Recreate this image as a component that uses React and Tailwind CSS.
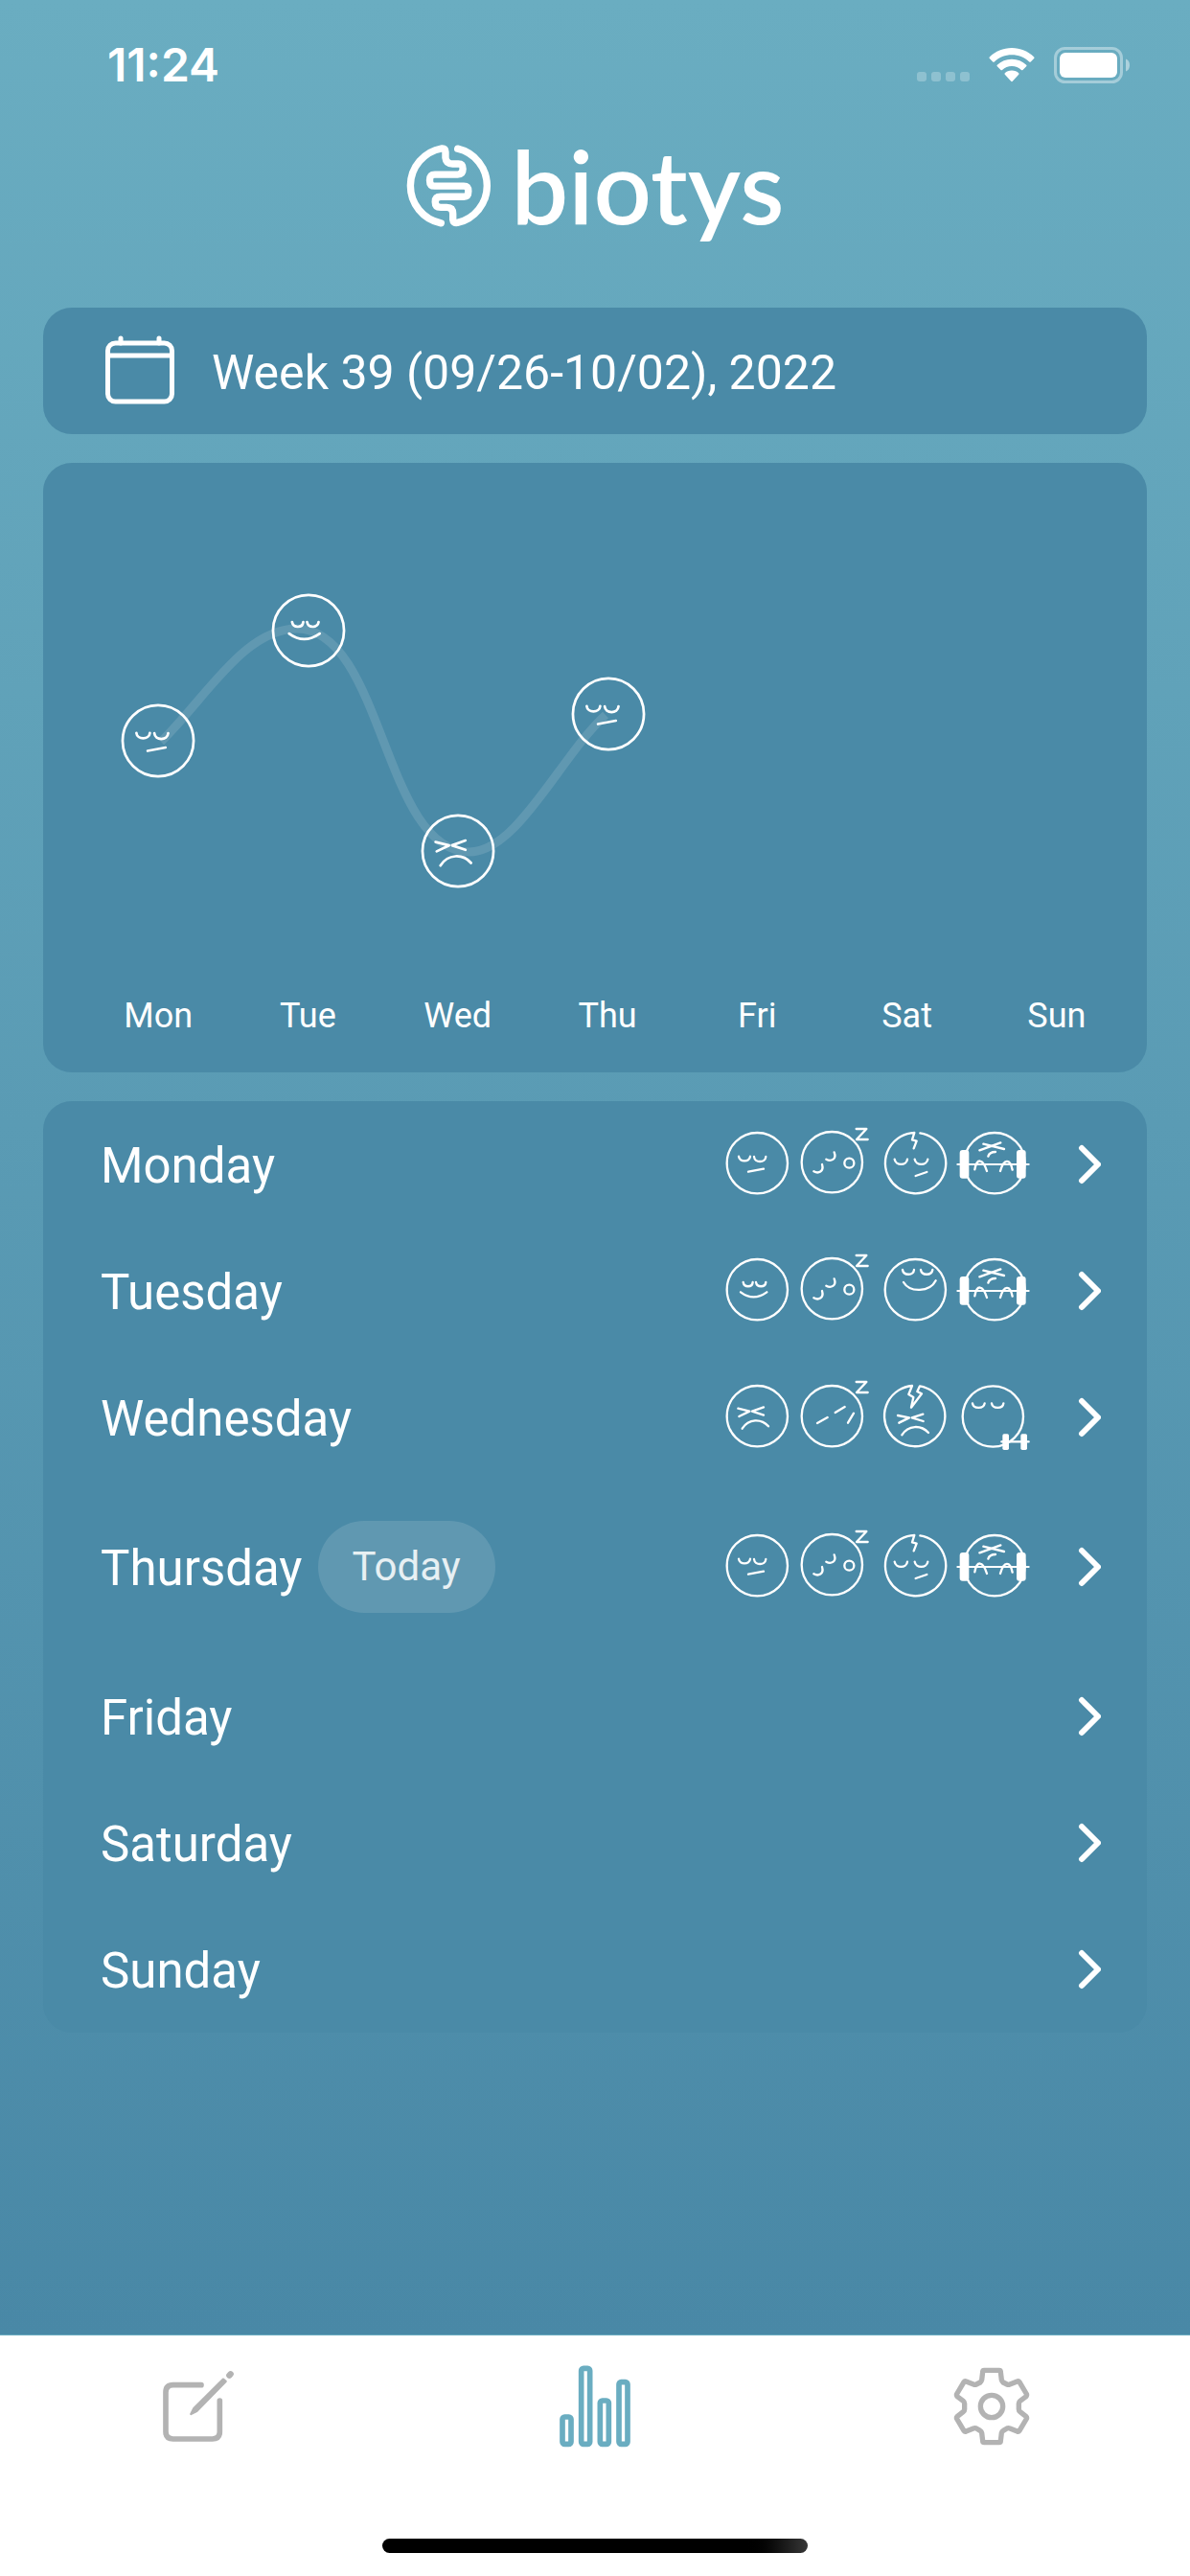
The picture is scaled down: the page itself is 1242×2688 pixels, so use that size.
import React from "react";

const days = [
  { name: "Monday", short: "Mon", mood: "neutral", sleep: "ok", pain: "mild", sport: "heavy" },
  { name: "Tuesday", short: "Tue", mood: "happy", sleep: "ok", pain: "none", sport: "heavy" },
  { name: "Wednesday", short: "Wed", mood: "sad", sleep: "bad", pain: "strong", sport: "light" },
  { name: "Thursday", short: "Thu", mood: "neutral", sleep: "ok", pain: "mild", sport: "heavy", today: true },
  { name: "Friday", short: "Fri" },
  { name: "Saturday", short: "Sat" },
  { name: "Sunday", short: "Sun" },
];

// position of each mood on the weekly chart
const points = [
  { x: 120, y: 290, mood: "neutral" },
  { x: 277, y: 175, mood: "happy" },
  { x: 433, y: 405, mood: "sad" },
  { x: 590, y: 262, mood: "neutral" },
];

const moodPaths = {
  neutral: "M94 140C96 159 128 159 130 140M142 141C144 161 177 161 179 141M124 188L172 179",
  happy: "M108 138C111 155 136 155 138 138M148 138C151 155 177 155 179 138M100 169Q140 199 182 169",
  sad: "M92 137L128 146L95 162M172 133L136 146L172 158M105 200C125 168 165 168 187 193",
};

const Mood = ({ type }) => (
  <>
    <circle cx="152" cy="161" r="95" />
    <path d={moodPaths[type]} />
  </>
);

const IconBox = ({ x, children }) => (
  <svg
    viewBox={`${x} 45 240 240`}
    className="w-20 h-20"
    fill="none"
    stroke="white"
    strokeWidth="7"
    strokeLinecap="round"
    strokeLinejoin="round"
  >
    {children}
  </svg>
);

const SleepIcon = ({ type }) => (
  <IconBox x={286}>
    <circle cx="386" cy={type === "bad" ? 161 : 158} r="95" />
    <path d="M462 54H494L463 87H498" />
    {type === "bad" ? (
      <path d="M340 183L372 165M396 150L426 132M436 182L454 152" />
    ) : (
      <>
        <path d="M393 127C402 150 382 157 368 149M355 165C362 188 343 195 329 187" />
        <circle cx="440" cy="161" r="15" />
      </>
    )}
  </IconBox>
);

const PainIcon = ({ type }) => (
  <IconBox x={526}>
    {type === "none" && (
      <>
        <circle cx="647" cy="161" r="95" />
        <path d="M607 99C610 118 641 118 643 99M664 99C667 118 698 118 701 99M610 138C630 171 692 170 711 133" />
      </>
    )}
    {type === "mild" && (
      <>
        <path d="M662 67A95 95 0 1 1 644 66L637 88L651 92L642 115" />
        <path d="M582 149C585 170 620 170 622 149M645 149C648 170 683 170 686 149M648 201L683 189" />
      </>
    )}
    {type === "strong" && (
      <>
        <path d="M661 67A95 95 0 1 1 637 66L626 93L641 102L634 134L667 91L653 84Z" />
        <path d="M592 159L628 166L596 182M671 155L636 166L672 177M605 220C625 188 665 188 688 213" />
      </>
    )}
  </IconBox>
);

const SportIcon = ({ type }) => (
  <IconBox x={766}>
    {type === "heavy" ? (
      <>
        <circle cx="895" cy="161" r="95" />
        <path d="M860 101L925 117M848 121L914 97M875 140C878 129 886 126 898 126" />
        <path d="M779 165H1002" strokeWidth="6" />
        <path d="M833 181C839 146 858 144 871 186M913 186C924 146 944 146 951 182" />
        <rect x="786" y="120" width="29" height="89" rx="9" fill="white" stroke="none" />
        <rect x="964" y="120" width="29" height="89" rx="9" fill="white" stroke="none" />
      </>
    ) : (
      <>
        <circle cx="890" cy="162" r="95" />
        <path d="M826 121C829 139 861 139 864 121M886 121C889 139 921 139 923 121M917 241H1002" />
        <rect x="920" y="217" width="20" height="50" rx="5" fill="white" stroke="none" />
        <rect x="977" y="217" width="20" height="50" rx="5" fill="white" stroke="none" />
      </>
    )}
  </IconBox>
);

const StatusBar = () => (
  <div className="flex justify-between items-center h-[135px] pl-[112px] pr-[62px] text-white">
    <span className="text-[48px] leading-none font-semibold font-[Inter,sans-serif]">11:24</span>
    <div className="flex items-center gap-5">
      <div className="flex gap-[5px] pt-6">
        <span className="w-2.5 h-2.5 rounded-[3px] bg-white/25" />
        <span className="w-2.5 h-2.5 rounded-[3px] bg-white/25" />
        <span className="w-2.5 h-2.5 rounded-[3px] bg-white/25" />
        <span className="w-2.5 h-2.5 rounded-[3px] bg-white/25" />
      </div>
      <svg viewBox="0 0 48 36" className="w-12 h-9" fill="white">
        <path d="M24 0C33 0 41 3.500 47.200 9.400Q48 10.200 47.200 11L43.800 14.400Q43 15 42.200 14.400C37 9.600 31 7.300 24 7.300S11 9.600 5.800 14.400Q5 15 4.200 14.400L.8 11Q0 10.200 .8 9.400C7 3.500 15 0 24 0Z" />
        <path d="M24 11.800C30 11.800 35 14 39.200 17.700Q40 18.500 39.200 19.300L35.500 23Q34.700 23.600 34 23C31 20.500 28 19.100 24 19.100S17 20.500 14 23Q13.300 23.600 12.500 23L8.800 19.300Q8 18.500 8.800 17.700C13 14 18 11.800 24 11.800Z" />
        <path d="M24 23.600C27 23.600 29.500 24.600 31.200 26.200Q32 27 31.200 27.800L24.800 34.800Q24 35.600 23.200 34.800L16.800 27.800Q16 27 16.800 26.200C18.500 24.600 21 23.600 24 23.600Z" />
      </svg>
      <svg viewBox="0 0 80 38" className="w-20 h-[38px]" fill="none">
        <rect x="1.500" y="1.500" width="69" height="35" rx="10" stroke="white" strokeOpacity=".4" strokeWidth="3" />
        <rect x="6" y="6" width="60" height="26" rx="6" fill="white" />
        <path d="M75 12.500Q79 14 79 19T75 25.500Z" fill="white" fillOpacity=".45" />
      </svg>
    </div>
  </div>
);

const Logo = () => (
  <h1 className="flex justify-center items-center gap-5 h-[126px] pb-2.5 text-white">
    <svg viewBox="78 60 268 264" className="w-[90px] h-[89px]" fill="none" stroke="white" strokeWidth="22" strokeLinecap="round">
      <path d="M186 309A118 118 0 0 1 189 77Q200 76 200 88V106Q202 125 222 125H240Q254 125 254 141Q254 158 238 158H167Q151 158 151 176Q151 194 167 194H257Q271 194 271 210Q271 227 257 227H185Q168 227 168 243Q168 260 185 260H204Q223 260 223 280V298Q224 310 237 308A118 118 0 0 0 238 78" />
    </svg>
    <span className="text-[106px] leading-none font-semibold font-[Lato,sans-serif]">biotys</span>
  </h1>
);

const WeekPicker = () => (
  <button className="flex items-center gap-[38px] w-full h-[132px] px-16 rounded-[30px] bg-[#4a8aa7] text-[50px]">
    <svg viewBox="0 0 74 74" className="w-[74px] h-[74px]" fill="none" stroke="white" strokeWidth="5" strokeLinecap="round">
      <rect x="3.500" y="8" width="67" height="61" rx="8" />
      <path d="M4 21H70" />
      <path d="M17 3V8M57 3V8" />
    </svg>
    <span className="pt-1">Week 39 (09/26-10/02), 2022</span>
  </button>
);

const MoodChart = () => (
  <section className="pb-8 rounded-[30px] bg-[#4a8aa7]">
    <svg viewBox="0 0 1152 550" className="w-full" fill="none">
      <path
        d="M123 291C170 245 210 173 265 173C355 174 355 406 445 406C495 406 540 306 587 263"
        stroke="white"
        strokeOpacity=".12"
        strokeWidth="9"
      />
      {points.map((p) => (
        <g
          key={p.x}
          transform={`translate(${p.x} ${p.y}) scale(.39) translate(-152 -161)`}
          stroke="white"
          strokeWidth="7"
          strokeLinecap="round"
          strokeLinejoin="round"
        >
          <Mood type={p.mood} />
        </g>
      ))}
    </svg>
    <div className="grid grid-cols-7 pl-[42px] pr-4 text-center text-[36px] leading-[54px]">
      {days.map((day) => (
        <span key={day.short}>{day.short}</span>
      ))}
    </div>
  </section>
);

const DayRow = ({ day }) => (
  <li>
    <a href={`#${day.name}`} className="flex items-center min-h-[132px] pl-[60px] pr-12">
      <span className="pt-1 text-[51px]">{day.name}</span>
      {day.today && (
        <span className="my-[42px] ml-4 px-9 rounded-full bg-white/12 text-[42px] leading-[96px] text-white/85">
          Today
        </span>
      )}
      {day.mood && (
        <span className="flex ml-auto">
          <IconBox x={46}>
            <Mood type={day.mood} />
          </IconBox>
          <SleepIcon type={day.sleep} />
          <PainIcon type={day.pain} />
          <SportIcon type={day.sport} />
        </span>
      )}
      <svg
        viewBox="0 0 24 42"
        className={day.mood ? "w-6 h-[42px] ml-[50px]" : "w-6 h-[42px] ml-auto"}
        fill="none"
        stroke="white"
        strokeWidth="6"
        strokeLinecap="round"
        strokeLinejoin="round"
      >
        <path d="M4 4L21 21L4 38" />
      </svg>
    </a>
  </li>
);

const TabBar = () => (
  <footer className="bg-white border-t border-[#6aadc1] pt-[13px] pb-6">
    <nav className="grid grid-cols-3 justify-items-center">
      <a href="#diary" aria-label="Diary">
        <svg viewBox="6 0 390 360" className="w-[130px] h-[120px]" fill="none" stroke="#b3b3b3" strokeWidth="17" strokeLinecap="round">
          <path d="M210 116H122Q99 116 99 139V262Q99 285 122 285H245Q268 285 268 262V165" />
          <path
            d="M178 207L187 189L279 98L287 105L196 198Z"
            fill="#b3b3b3"
            strokeWidth="7"
            strokeLinejoin="round"
          />
          <path d="M298 86L302 82" strokeWidth="19" />
        </svg>
      </a>
      <a href="#stats" aria-label="Statistics">
        <svg viewBox="-12 0 390 360" className="w-[130px] h-[120px]" fill="none" stroke="#6aadc1" strokeWidth="17">
          <rect x="81" y="216" width="27" height="85" rx="7" />
          <rect x="140" y="64" width="27" height="237" rx="7" />
          <rect x="199" y="165" width="27" height="136" rx="7" />
          <rect x="258" y="107" width="27" height="194" rx="7" />
        </svg>
      </a>
      <a href="#settings" aria-label="Settings">
        <svg viewBox="0 0 390 360" className="w-[130px] h-[120px]" fill="none" stroke="#b3b3b3" strokeWidth="16" strokeLinejoin="round">
          <path d="M172 70H218Q223 70 223 75L226 100Q227 105 231 108L243 114Q247 116 252 114L275 105Q279 103 282 107L304 144Q306 148 303 152L284 166Q280 169 280 174V192Q280 197 284 200L303 215Q306 218 304 222L282 259Q279 263 275 261L252 252Q247 250 243 252L231 259Q227 261 226 266L223 291Q223 296 218 296H172Q167 296 167 291L164 266Q163 261 159 259L147 252Q143 250 138 252L115 261Q111 263 108 259L86 222Q84 218 87 215L106 200Q110 197 110 192V174Q110 169 106 166L87 152Q84 148 86 144L108 107Q111 103 115 105L138 114Q143 116 147 114L159 108Q163 105 164 100L167 75Q167 70 172 70Z" />
          <circle cx="195" cy="183" r="35" />
        </svg>
      </a>
    </nav>
    <div className="w-[444px] h-[15px] mt-[79px] mx-auto rounded-full bg-linear-to-r from-black from-85% to-[#383838]" />
  </footer>
);

const App = () => {
  return (
    <div className="flex flex-col min-h-screen font-[Roboto,sans-serif] text-white">
      <div className="flex-1 bg-linear-to-b from-[#6aadc1] to-[#4988a6]">
        <StatusBar />
        <Logo />
        <main className="flex flex-col gap-[30px] px-[45px] pt-[60px] pb-10">
          <WeekPicker />
          <MoodChart />
          <ul className="rounded-[30px] bg-[#4a8aa7]">
            {days.map((day) => (
              <DayRow key={day.name} day={day} />
            ))}
          </ul>
        </main>
      </div>
      <TabBar />
    </div>
  );
};

export default App;
